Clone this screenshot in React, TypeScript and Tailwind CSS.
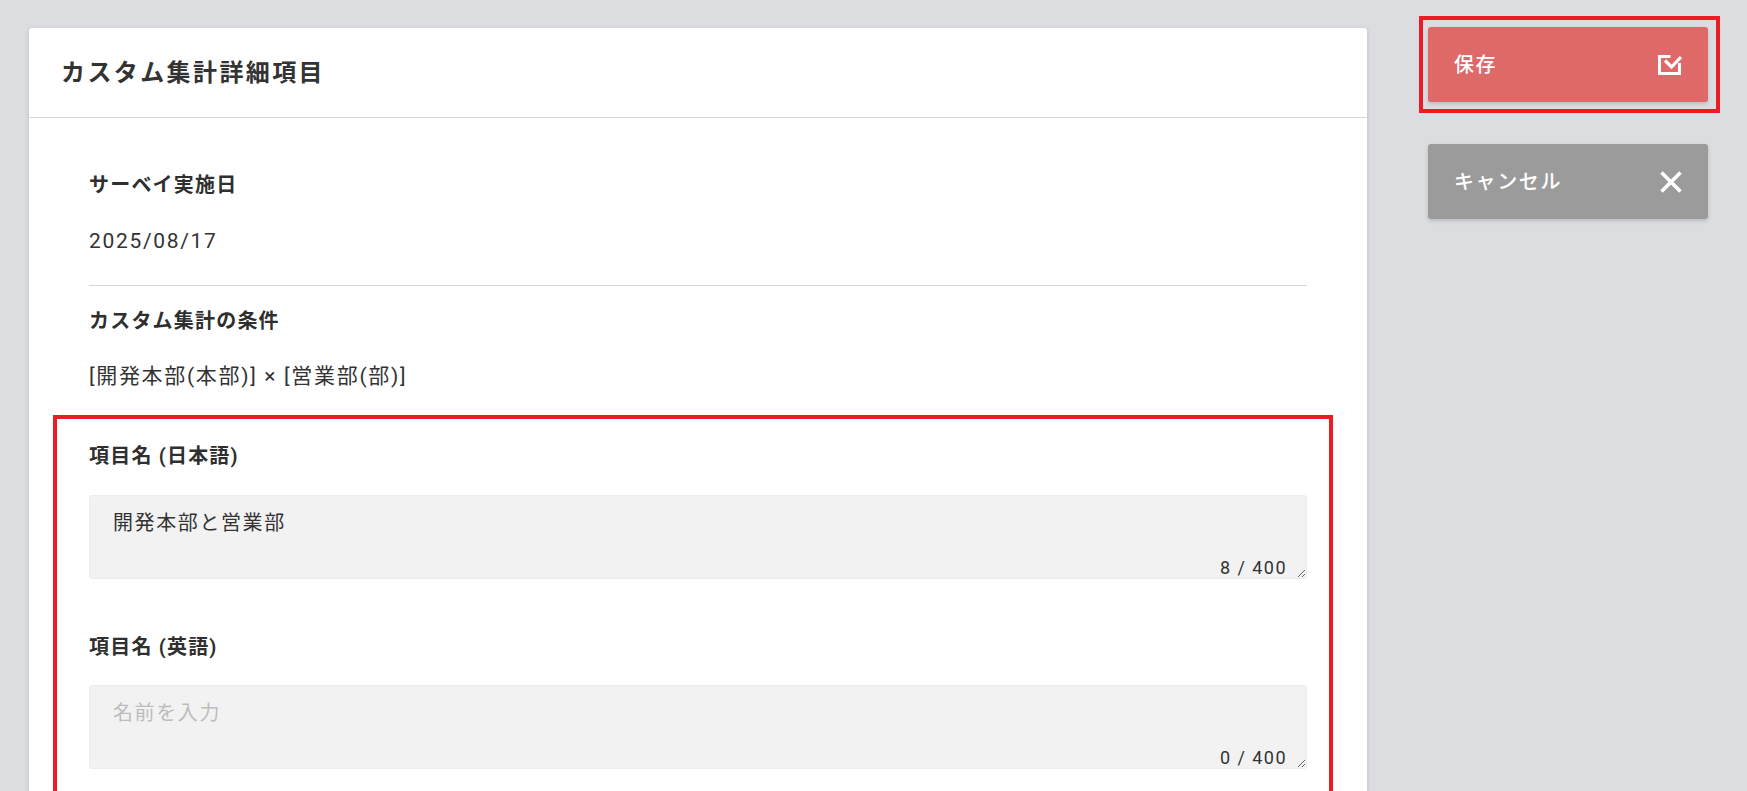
import React from "react";

const FONT = '"Roboto", "Noto Sans CJK JP", sans-serif';

function CheckSquareIcon() {
  return (
    <svg width="24" height="20" viewBox="0 0 24 20" fill="none" stroke="white">
      <path d="M12.5 1.5 H1.5 V18.5 H21.5 V8" strokeWidth="3" />
      <path d="M7 5.5 L13.5 12 L23 2" strokeWidth="3.2" />
    </svg>
  );
}

function CloseIcon() {
  return (
    <svg width="22" height="22" viewBox="0 0 22 22" fill="none" stroke="white">
      <path d="M1.5 1.5 L20.5 20.5 M20.5 1.5 L1.5 20.5" strokeWidth="3.6" />
    </svg>
  );
}

function Label({ children }: { children: React.ReactNode }) {
  return (
    <div className="text-[20px] leading-[30px] font-bold tracking-[0.06em] text-[#2f2f2f]">
      {children}
    </div>
  );
}

function TextBox({ value, placeholder, count }: { value?: string; placeholder?: string; count: number }) {
  return (
    <div className="relative">
      <textarea
        defaultValue={value}
        placeholder={placeholder}
        className="block w-full h-[84px] bg-[#f2f2f2] border border-[#ececec] rounded-[3px] pl-[23px] pt-[12px] text-[20px] leading-[30px] tracking-[0.08em] text-[#333] placeholder:text-[#bdbdbd] outline-none"
        style={{ fontFamily: FONT }}
      />
      <span className="absolute right-[20px] bottom-[2px] text-[18px] leading-[18px] tracking-[0.08em] text-[#333]">
        {count} / 400
      </span>
    </div>
  );
}

export default function App() {
  return (
    <div
      className="min-h-screen bg-[#dcdde1] flex items-start pl-[29px] pt-[28px]"
      style={{ fontFamily: FONT }}
    >
      {/* main card */}
      <div className="w-[1338px] bg-white rounded-[3px] shadow-[0_1px_4px_rgba(0,0,0,0.15)] pb-[60px]">
        <div className="h-[90px] flex items-center px-[32px] border-b border-[#d9d9d9]">
          <h1 className="text-[24px] font-bold tracking-[0.1em] text-[#333]">カスタム集計詳細項目</h1>
        </div>

        <div className="px-[60px] pt-[52px]">
          <Label>サーベイ実施日</Label>
          <div className="mt-[26px] text-[21px] leading-[30px] tracking-[0.08em] text-[#333]">2025/08/17</div>

          <div className="mt-[29px] h-px bg-[#d6d6d6]" />

          <div className="mt-[20px]">
            <Label>カスタム集計の条件</Label>
          </div>
          <div className="mt-[25px] text-[21px] leading-[30px] tracking-[0.08em] text-[#333]">
            [開発本部(本部)] × [営業部(部)]
          </div>

          {/* highlighted fields */}
          <div className="mt-[24px] ml-[-36px] mr-[-26px] border-4 border-[#ec1c24] pl-[32px] pr-[22px] pt-[22px] pb-[40px]">
            <Label>項目名 (日本語)</Label>
            <div className="mt-[24px]">
              <TextBox value="開発本部と営業部" count={8} />
            </div>

            <div className="mt-[53px]">
              <Label>項目名 (英語)</Label>
            </div>
            <div className="mt-[23px]">
              <TextBox placeholder="名前を入力" count={0} />
            </div>
          </div>
        </div>
      </div>

      {/* action buttons */}
      <div className="ml-[61px] mt-[-1px] w-[280px] flex flex-col">
        <div className="relative">
          <button className="w-full h-[75px] rounded-[3px] bg-[#df6969] shadow-[0_2px_4px_rgba(0,0,0,0.15)] flex items-center justify-between pl-[26px] pr-[26px] text-white text-[20px] font-medium tracking-[0.08em]">
            <span>保存</span>
            <CheckSquareIcon />
          </button>
          <div className="absolute left-[-9px] right-[-12px] top-[-11px] bottom-[-11px] border-4 border-[#ec1c24] pointer-events-none" />
        </div>
        <button className="mt-[42px] w-full h-[75px] rounded-[3px] bg-[#9b9b9b] shadow-[0_2px_4px_rgba(0,0,0,0.15)] flex items-center justify-between pl-[26px] pr-[26px] text-white text-[20px] font-medium tracking-[0.08em]">
          <span>キャンセル</span>
          <CloseIcon />
        </button>
      </div>
    </div>
  );
}
